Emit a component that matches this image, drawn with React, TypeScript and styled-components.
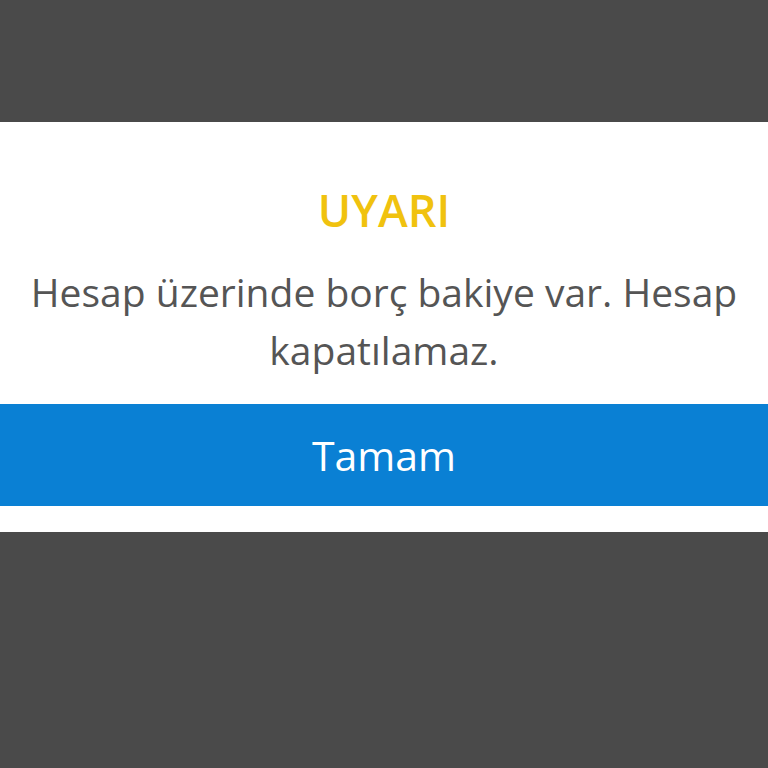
import styled, { createGlobalStyle } from "styled-components";

const GlobalStyle = createGlobalStyle`
  html, body {
    margin: 0;
    padding: 0;
    background: #4a4a4a;
    font-family: "Open Sans", "Noto Sans", sans-serif;
  }
  #root {
    min-height: 768px;
  }
`;

const Screen = styled.div`
  width: 768px;
  height: 768px;
  padding-top: 122px;
  box-sizing: border-box;
`;

const Dialog = styled.div`
  background: #fff;
  padding: 58px 0 26px;
  display: flex;
  flex-direction: column;
  align-items: center;
`;

const Title = styled.div`
  color: #f0c20f;
  font-size: 45px;
  line-height: 60px;
  font-weight: 600;
`;

const Message = styled.p`
  margin: 23px 0 25px;
  padding: 0 10px;
  color: #555;
  font-size: 39px;
  line-height: 58px;
  text-align: center;
`;

const OkButton = styled.button`
  width: 100%;
  height: 102px;
  border: none;
  background: #0a80d4;
  color: #fff;
  font-family: inherit;
  font-size: 41px;
  font-weight: 400;
  cursor: pointer;
`;

export default function App() {
  return (
    <>
      <GlobalStyle />
      <Screen>
        <Dialog>
          <Title>UYARI</Title>
          <Message>
            Hesap üzerinde borç bakiye var. Hesap
            <br />
            kapatılamaz.
          </Message>
          <OkButton>Tamam</OkButton>
        </Dialog>
      </Screen>
    </>
  );
}
